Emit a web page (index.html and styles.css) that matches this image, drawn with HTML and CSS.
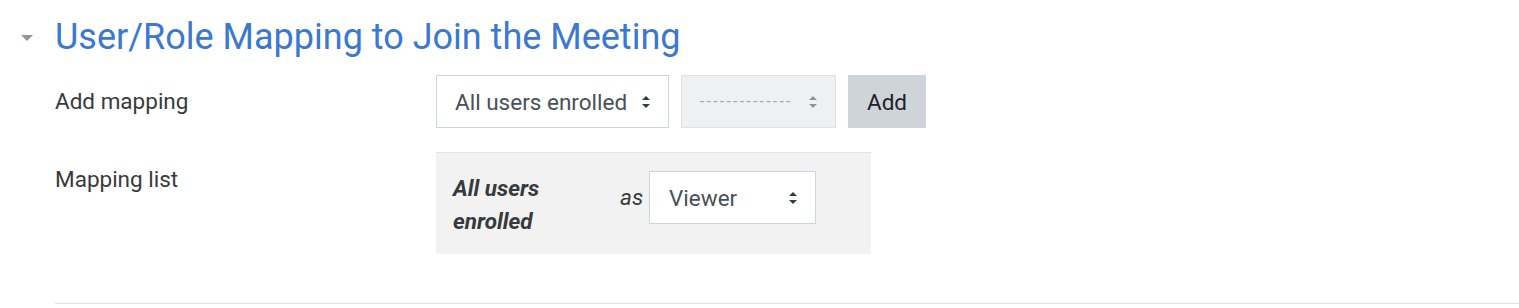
FILE: index.html
```html
<!DOCTYPE html>
<html>
<head>
<meta charset="utf-8">
<link rel="stylesheet" href="styles.css">
</head>
<body>
<fieldset class="section">
  <div class="legend">
    <span class="caret"><svg width="14" height="8" viewBox="0 0 14 8"><path d="M1 1 L13 1 L7 7 Z" fill="#8f959e"/></svg></span>
    <h3 class="title">User/Role Mapping to Join the Meeting</h3>
  </div>
  <div class="form-row row-add">
    <div class="label">Add mapping</div>
    <div class="fields">
      <div class="select sel-type">All users enrolled<span class="arrows"></span></div>
      <div class="select sel-disabled"><span class="dash">--------------</span><span class="arrows light"></span></div>
      <button class="btn-add">Add</button>
    </div>
  </div>
  <div class="form-row row-list">
    <div class="label">Mapping list</div>
    <div class="fields">
      <div class="mapping-box">
        <div class="map-name">All users enrolled</div>
        <div class="map-as">as</div>
        <div class="select sel-role">Viewer<span class="arrows"></span></div>
      </div>
    </div>
  </div>
  <div class="divider"></div>
</fieldset>
</body>
</html>
```
FILE: styles.css
```css
html, body {
  margin: 0;
  padding: 0;
  background: #fff;
}
body {
  font-family: Roboto, "Liberation Sans", sans-serif;
  font-size: 22.5px;
  color: #373a3c;
}
.section {
  border: 0;
  margin: 0;
  padding: 0 0 0 55px;
  min-width: 0;
}
.legend {
  display: flex;
  align-items: center;
  margin-left: -35px;
  padding-top: 16px;
}
.caret {
  display: flex;
  width: 35px;
}
.title {
  margin: 0;
  font-weight: 400;
  font-size: 36px;
  line-height: 43px;
  color: #3a78d1;
}
.form-row {
  display: flex;
}
.row-add {
  margin-top: 16px;
}
.row-list {
  margin-top: 24px;
}
.label {
  width: 381px;
  line-height: 34px;
}
.row-add .label {
  padding-top: 9px;
}
.row-list .label {
  padding-top: 10px;
}
.fields {
  display: flex;
  align-items: center;
  gap: 12px;
}
.select {
  position: relative;
  box-sizing: border-box;
  height: 53px;
  border: 1px solid #ced4da;
  background: #fff;
  display: flex;
  align-items: center;
  padding: 0 35px 0 18px;
  color: #495057;
  line-height: 34px;
}
.sel-type {
  width: 233px;
}
.sel-disabled {
  width: 155px;
  background: #eff0f2;
  border-color: #dee2e6;
}
.dash {
  font-size: 16px;
  color: #a4a8ad;
  letter-spacing: 2.2px;
  white-space: nowrap;
}
.arrows {
  position: absolute;
  right: 18px;
  top: 50%;
  width: 8px;
  height: 12px;
  margin-top: -6px;
}
.arrows::before, .arrows::after {
  content: "";
  position: absolute;
  left: 0;
  border-left: 4px solid transparent;
  border-right: 4px solid transparent;
}
.arrows::before {
  top: 0;
  border-bottom: 4px solid #343a40;
}
.arrows::after {
  bottom: 0;
  border-top: 4px solid #343a40;
}
.arrows.light::before { border-bottom-color: #8f959e; }
.arrows.light::after { border-top-color: #8f959e; }
.btn-add {
  height: 53px;
  width: 78px;
  border: 0;
  background: #ced4da;
  font: inherit;
  color: #1d2125;
  padding: 0;
}
.mapping-box {
  box-sizing: border-box;
  width: 435px;
  background: #f2f2f2;
  border-top: 1px solid #e3e3e3;
  display: flex;
  align-items: flex-start;
  padding: 18px 0 16px 17px;
}
.map-name {
  width: 150px;
  font-weight: 700;
  font-style: italic;
  line-height: 33px;
  color: #373a3c;
  margin-top: 1px;
}
.map-as {
  margin-left: 17px;
  width: 29px;
  font-style: italic;
  line-height: 53px;
}
.sel-role {
  width: 167px;
  padding-left: 19px;
}
.divider {
  margin-top: 49px;
  border-top: 1px solid #dee2e6;
}
```
